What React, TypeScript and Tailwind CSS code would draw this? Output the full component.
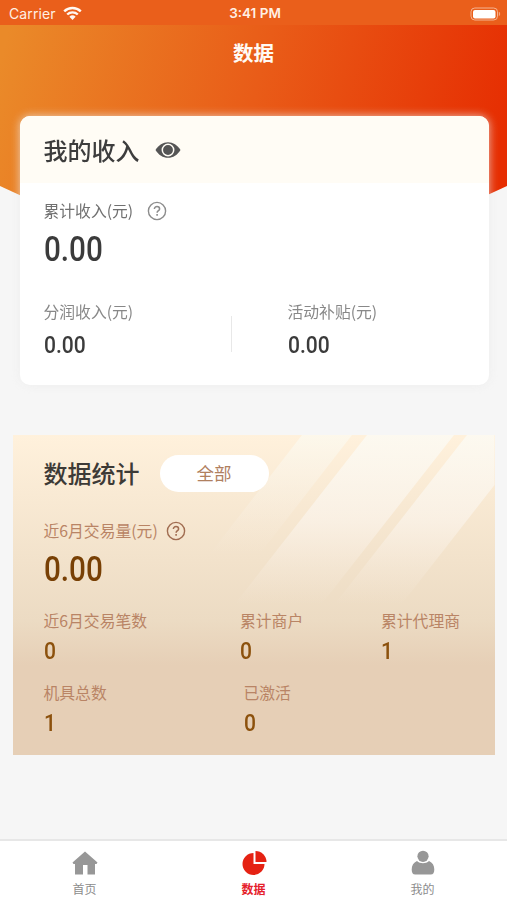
import clsx from 'clsx';

type Stat = { label: string; value: string; width: string };

const firstRow: Stat[] = [
  { label: '近6月交易笔数', value: '0', width: 'w-[196.5px]' },
  { label: '累计商户', value: '0', width: 'w-[141px]' },
  { label: '累计代理商', value: '1', width: 'w-[100px]' },
];

const secondRow: Stat[] = [
  { label: '机具总数', value: '1', width: 'w-[200px]' },
  { label: '已激活', value: '0', width: 'w-[100px]' },
];

function Amount({ value, large, className }: { value: string; large?: boolean; className?: string }) {
  return (
    <div
      className={clsx(
        "flex origin-left scale-x-[0.86] items-center font-['Roboto','Liberation_Sans',sans-serif] font-medium whitespace-nowrap",
        large ? 'h-9 text-[34.5px]' : 'h-7 text-[24.5px]',
        className
      )}
    >
      {value}
    </div>
  );
}

function HelpIcon({ className }: { className?: string }) {
  return (
    <svg width="20" height="20" viewBox="0 0 20 20" fill="none" stroke="currentColor" className={className}>
      <circle cx="10" cy="10" r="8.6" strokeWidth="1.4" />
      <path d="M7.4 8.1c0-1.6 1.1-2.5 2.6-2.5s2.6.9 2.6 2.3c0 1.7-2.5 1.8-2.5 3.9" strokeWidth="1.5" />
      <path d="M10.1 13v1.7" strokeWidth="1.6" />
    </svg>
  );
}

function StatusBar() {
  return (
    <div className="flex h-[25px] items-center bg-[#ea5f1b] pl-[9px] pr-[6px] font-['Inter','Liberation_Sans',sans-serif] text-[14px] text-[#fff0e4]">
      <div className="flex flex-1 items-center gap-[7px] pt-0.5">
        <span className="tracking-[0.1px]">Carrier</span>
        <svg width="19" height="15" viewBox="0 0 19 15" fill="none" stroke="#fff8f2" strokeWidth="2.4">
          <path d="M1.2 5.3a12 12 0 0 1 16.6 0" />
          <path d="M4.2 8.5a7.7 7.7 0 0 1 10.6 0" />
          <path d="M9.5 14 6.4 10.7a4.6 4.6 0 0 1 6.2 0z" fill="#fff8f2" stroke="none" />
        </svg>
      </div>
      <span className="pt-0.5 text-[13.5px] font-semibold">3:41 PM</span>
      <div className="flex flex-1 items-center justify-end pt-0.5">
        <svg width="31" height="14" viewBox="0 0 31 14">
          <rect x="1" y="1" width="26.5" height="12" rx="3.8" fill="none" stroke="#f4b392" strokeWidth="1" />
          <rect x="3" y="3" width="22.5" height="8.4" rx="2" fill="#fff" />
          <path d="M28.8 4.8c1.8.6 1.8 3.8 0 4.4z" fill="#f4a57f" />
        </svg>
      </div>
    </div>
  );
}

function IncomeCard() {
  return (
    <section className="relative mt-[-84px] ml-[19.5px] h-[268.5px] w-[469px] overflow-hidden rounded-[10px] bg-white">
      <div className="flex h-[67px] items-center bg-[#fffcf5] pl-6">
        <h2 className="text-[24px] font-medium text-[#3d3d3d]">我的收入</h2>
        <svg width="26" height="18" viewBox="0 0 26 18" className="ml-[15px]">
          <path d="M.5 9C3.5 4 8 1.2 13 1.2S22.500 4 25.500 9C22.500 14 18 16.800 13 16.800S3.500 14 .5 9z" fill="#555" />
          <circle cx="13" cy="9" r="5.700" fill="none" stroke="#fffcf5" strokeWidth="1.500" />
          <circle cx="13" cy="9" r="3.700" fill="#555" />
        </svg>
      </div>
      <div className="pl-6">
        <div className="mt-4 flex h-6 items-center text-[#707070]">
          <span className="text-[15.8px]">累计收入(元)</span>
          <HelpIcon className="ml-[14px] text-[#8c8c8c]" />
        </div>
        <Amount value="0.00" large className="mt-[9px] text-[#3b3b3b]" />
        <div className="mt-8 flex items-center">
          <div className="w-[187px]">
            <div className="flex h-6 items-center text-[15.8px] text-[#888]">分润收入(元)</div>
            <Amount value="0.00" className="mt-[7px] text-[#3b3b3b]" />
          </div>
          <div className="mt-2 h-9 w-px bg-[#e8e8e8]" />
          <div className="ml-14">
            <div className="flex h-6 items-center text-[15.8px] text-[#888]">活动补贴(元)</div>
            <Amount value="0.00" className="mt-[7px] text-[#3b3b3b]" />
          </div>
        </div>
      </div>
    </section>
  );
}

function StatRow({ items, className }: { items: Stat[]; className?: string }) {
  return (
    <div className={clsx('flex', className)}>
      {items.map((item) => (
        <div key={item.label} className={item.width}>
          <div className="flex h-6 items-center text-[15.8px] whitespace-nowrap text-[#b98465]">{item.label}</div>
          <Amount value={item.value} className="mt-[5px] text-[#8c510d]" />
        </div>
      ))}
    </div>
  );
}

function StatsPanel() {
  return (
    <section className="relative mt-[50px] ml-[13px] h-[320.5px] w-[481.5px] bg-linear-to-b from-[#fff1dc] via-[#ecdbc3] via-58% to-[#e6cfb6] to-72%">
      {/* light streaks */}
      <svg width="482" height="180" viewBox="0 0 482 180" className="absolute top-0 left-0">
        <defs>
          <linearGradient id="streak" x1="0" y1="0" x2="0" y2="170" gradientUnits="userSpaceOnUse">
            <stop offset="0" stopColor="#fcfaf2" stopOpacity="0.9" />
            <stop offset="0.5" stopColor="#fbf5ee" stopOpacity="0.62" />
            <stop offset="1" stopColor="#f8eee4" stopOpacity="0" />
          </linearGradient>
          <linearGradient id="streakSoft" x1="0" y1="0" x2="0" y2="120" gradientUnits="userSpaceOnUse">
            <stop offset="0" stopColor="#fcfaf0" stopOpacity="0.75" />
            <stop offset="1" stopColor="#f8eee4" stopOpacity="0" />
          </linearGradient>
        </defs>
        <path d="M289 0H339L246 120H196z" fill="url(#streakSoft)" />
        <path d="M354 0H441L308 170H221z" fill="url(#streak)" />
        <path d="M454 0H481.500V50L388 170H321z" fill="url(#streak)" />
      </svg>
      <div className="relative pt-5 pl-[30.500px]">
        <div className="flex h-[37px] items-center">
          <h2 className="text-[24px] font-medium text-[#3d3a36]">数据统计</h2>
          <button className="ml-5 flex h-[37px] w-[109px] items-center justify-center rounded-full bg-white text-[17.500px] text-[#b0805f]">
            全部
          </button>
        </div>
        <div className="mt-[27px] flex h-6 items-center text-[#b98465]">
          <span className="text-[15.8px]">近6月交易量(元)</span>
          <HelpIcon className="ml-2 text-[#a06c50]" />
        </div>
        <Amount value="0.00" large className="mt-[9px] text-[#784005]" />
        <StatRow items={firstRow} className="mt-[21px]" />
        <StatRow items={secondRow} className="mt-[15px]" />
      </div>
    </section>
  );
}

function TabBar() {
  return (
    <nav className="mt-auto flex h-[61px] border-t-2 border-[#e7e7e7] bg-white text-[12px] text-[#8c8c8c]">
      <a className="flex flex-1 flex-col items-center pt-[9px]">
        <svg width="26" height="26" viewBox="0 0 26 26" fill="#979797">
          <path d="M13 1.500 25.500 12.500 24.500 14H23V24.500H15.500V15H11V24.500H3V14H1.500L.5 12.500z" />
        </svg>
        <span className="mt-[5px] leading-4">首页</span>
      </a>
      <a className="flex flex-1 flex-col items-center pt-[9px] font-bold text-[#e5202a]">
        <svg width="26" height="26" viewBox="0 0 26 26" fill="#e52213">
          <path d="M12.500 3A11 11 0 1 0 23.500 14H12.500z" />
          <path d="M14.500 1A11 11 0 0 1 25.500 12H14.500z" />
        </svg>
        <span className="mt-[5px] leading-4">数据</span>
      </a>
      <a className="flex flex-1 flex-col items-center pt-[9px]">
        <svg width="26" height="26" viewBox="0 0 26 26" fill="#979797">
          <circle cx="13" cy="6.300" r="5.600" />
          <path d="M7 11c3 3 9 3 12 0 3.500 1.500 5.300 4.500 5.300 8.500 0 3-1 5-3.600 5H5.300c-2.600 0-3.600-2-3.600-5C1.700 15.500 3.500 12.500 7 11z" />
        </svg>
        <span className="mt-[5px] leading-4">我的</span>
      </a>
    </nav>
  );
}

export default function App() {
  return (
    <div className="flex h-[900px] w-[507px] flex-col overflow-hidden bg-[#f6f6f6] font-['Noto_Sans_CJK_SC',sans-serif]">
      <header className="h-[200px] shrink-0 bg-[linear-gradient(105deg,#ea8a29_3%,#e95c18_50%,#e62e02_96%)] [clip-path:polygon(0_0,100%_0,100%_186px,94%_200px,6%_200px,0_186px)]">
        <StatusBar />
        <h1 className="flex h-[54px] items-center justify-center text-[20.500px] font-bold text-[#fffaf5]">数据</h1>
      </header>
      <div className="shrink-0 [filter:drop-shadow(0_0_5px_rgba(235,235,235,0.75))]">
        <IncomeCard />
      </div>
      <StatsPanel />
      <TabBar />
    </div>
  );
}
